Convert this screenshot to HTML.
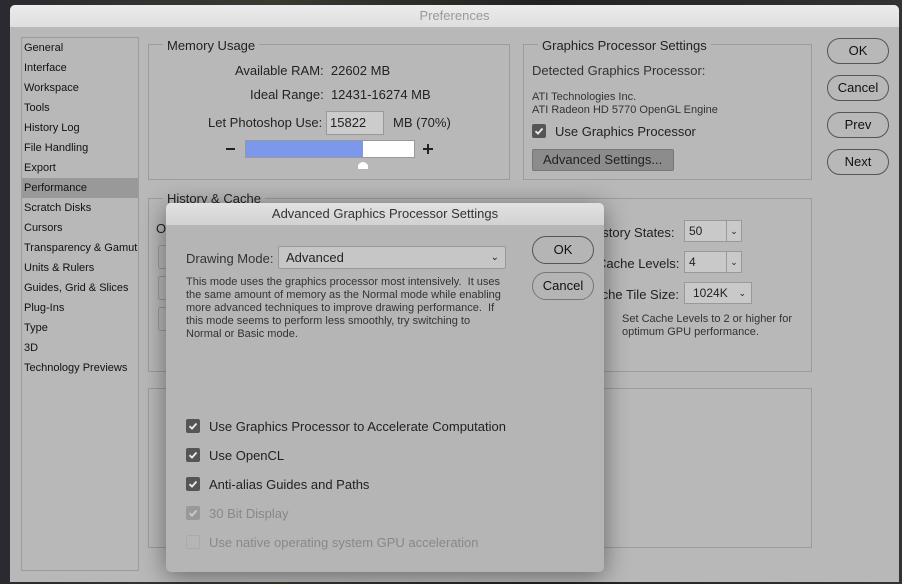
<!DOCTYPE html>
<html><head><style>
*{box-sizing:border-box;margin:0;padding:0}
body{width:902px;height:584px;overflow:hidden;background:linear-gradient(90deg,#2a2a30,#3a3a30 30%,#222 60%,#333);font-family:"Liberation Sans",sans-serif;color:#222;position:relative}
.a{position:absolute}
.win{left:10px;top:5px;width:889px;height:577px;background:#b8b8b8;border-radius:5px 5px 0 0}
.tb{left:0;top:0;width:889px;height:22px;background:linear-gradient(#ececec,#dedede);border-radius:5px 5px 0 0;text-align:center;font-size:13px;color:#999;line-height:22px}
.grp{border:1px solid #9c9c9c}
.lg{background:#b8b8b8;padding:0 4px;font-size:13px;color:#222}
.side{left:11px;top:32px;width:118px;height:534px;border:1px solid #9c9c9c}
.side div{height:20px;line-height:20px;font-size:11px;padding-left:2px;color:#111;white-space:nowrap;overflow:hidden}
.btn{border:1px solid #555;border-radius:14px;text-align:center;font-size:13px;color:#111;line-height:23px;height:26px;width:62px}
.cb{width:14px;height:14px;background:#555;border-radius:2px}
.cb svg{display:block}
.sel{border:1px solid #999;background:#c9c9c9;height:22px;font-size:12px;line-height:20px;padding-left:4px}
</style></head><body>
<div class="a win">
 <div class="a tb">Preferences</div>
 <div class="a side">
  <div>General</div><div>Interface</div><div>Workspace</div><div>Tools</div><div>History Log</div><div>File Handling</div><div>Export</div><div style="background:#999">Performance</div><div>Scratch Disks</div><div>Cursors</div><div>Transparency &amp; Gamut</div><div>Units &amp; Rulers</div><div>Guides, Grid &amp; Slices</div><div>Plug-Ins</div><div>Type</div><div>3D</div><div>Technology Previews</div>
 </div>
 <div class="a grp" style="left:138px;top:39px;width:362px;height:136px"></div>
 <div class="a lg" style="left:153px;top:33px">Memory Usage</div>
 <div class="a" style="left:225px;top:58px;font-size:13px">Available RAM:&nbsp; 22602 MB</div>
 <div class="a" style="left:240px;top:82px;font-size:13px">Ideal Range:&nbsp; 12431-16274 MB</div>
 <div class="a" style="left:198px;top:110px;font-size:13px">Let Photoshop Use:</div>
 <div class="a" style="left:316px;top:106px;width:58px;height:24px;background:#ccc;border:1px solid #999;font-size:13px;line-height:22px;padding-left:3px">15822</div>
 <div class="a" style="left:383px;top:110px;font-size:13px">MB (70%)</div>
 <div class="a" style="left:216px;top:143px;width:9px;height:2px;background:#222"></div>
 <div class="a" style="left:235px;top:135px;width:170px;height:18px;background:#fff;border:1px solid #999"><div style="width:117px;height:16px;background:#7c98ec"></div></div>
 <div class="a" style="left:413px;top:143px;width:10px;height:2px;background:#222"></div>
 <div class="a" style="left:417px;top:139px;width:2px;height:10px;background:#222"></div>
 <svg class="a" style="left:347px;top:154px" width="12" height="11"><path d="M1 10 L1 6 Q6 0 11 6 L11 10 Z" fill="#fff"/></svg>
 <div class="a grp" style="left:513px;top:39px;width:289px;height:136px"></div>
 <div class="a lg" style="left:528px;top:33px">Graphics Processor Settings</div>
 <div class="a" style="left:522px;top:58px;font-size:13px;color:#333">Detected Graphics Processor:</div>
 <div class="a" style="left:522px;top:86px;font-size:11px;color:#333;line-height:13px">ATI Technologies Inc.<br>ATI Radeon HD 5770 OpenGL Engine</div>
 <div class="a cb" style="left:522px;top:119px"><svg width="14" height="14"><path d="M3.5 7.2 L6 9.6 L10.5 4.5" stroke="#eee" stroke-width="1.8" fill="none"/></svg></div>
 <div class="a" style="left:545px;top:119px;font-size:13px">Use Graphics Processor</div>
 <div class="a" style="left:522px;top:144px;width:142px;height:22px;background:#8c8c8c;border:1px solid #777;border-radius:2px;font-size:13px;line-height:20px;padding-left:10px">Advanced Settings...</div>
 <div class="a btn" style="left:817px;top:33px">OK</div>
 <div class="a btn" style="left:817px;top:70px">Cancel</div>
 <div class="a btn" style="left:817px;top:107px">Prev</div>
 <div class="a btn" style="left:817px;top:144px">Next</div>
 <div class="a grp" style="left:138px;top:193px;width:664px;height:174px"></div>
 <div class="a lg" style="left:153px;top:186px">History &amp; Cache</div>
 <div class="a grp" style="left:138px;top:383px;width:664px;height:160px"></div>
 <div class="a" style="left:580px;top:220px;font-size:13px">History States:</div>
 <div class="a sel" style="left:674px;top:215px;width:58px">50<span style="position:absolute;right:0;top:0;width:15px;border-left:1px solid #999;text-align:center;font-size:9px">⌄</span></div>
 <div class="a" style="left:587px;top:251px;font-size:13px">Cache Levels:</div>
 <div class="a sel" style="left:674px;top:246px;width:58px">4<span style="position:absolute;right:0;top:0;width:15px;border-left:1px solid #999;text-align:center;font-size:9px">⌄</span></div>
 <div class="a" style="left:575px;top:282px;font-size:13px">Cache Tile Size:</div>
 <div class="a sel" style="left:674px;top:277px;width:68px;padding-left:8px">1024K<span style="position:absolute;right:5px;top:0;font-size:9px">⌄</span></div>
 <div class="a" style="left:612px;top:308px;font-size:11px;color:#333;line-height:13px">Set Cache Levels to 2 or higher for<br>optimum GPU performance.</div>
 <div class="a" style="left:146px;top:216px;font-size:13px">O</div>
 <div class="a" style="left:148px;top:240px;width:20px;height:24px;border:1px solid #999;border-radius:3px"></div>
 <div class="a" style="left:148px;top:271px;width:20px;height:24px;border:1px solid #999;border-radius:3px"></div>
 <div class="a" style="left:148px;top:302px;width:20px;height:24px;border:1px solid #999;border-radius:3px"></div>
</div>
<div class="a" style="left:166px;top:203px;width:438px;height:369px;background:#b5b5b5;border-radius:5px;box-shadow:0 4px 25px rgba(0,0,0,.45)">
 <div class="a" style="left:0;top:0;width:438px;height:22px;background:linear-gradient(#e2e2e2,#d2d2d2);border-radius:5px 5px 0 0;text-align:center;font-size:13px;color:#333;line-height:22px">Advanced Graphics Processor Settings</div>
 <div class="a" style="left:20px;top:48px;font-size:13px;color:#333">Drawing Mode:</div>
 <div class="a" style="left:112px;top:43px;width:228px;height:23px;border:1px solid #999;background:#c6c6c6;border-radius:2px;font-size:13px;line-height:21px;padding-left:7px">Advanced<span style="position:absolute;right:6px;top:0;font-size:10px">⌄</span></div>
 <div class="a" style="left:20px;top:73px;font-size:11px;color:#333;line-height:13px;width:318px">This mode uses the graphics processor most intensively.&nbsp; It uses the same amount of memory as the Normal mode while enabling more advanced techniques to improve drawing performance.&nbsp; If this mode seems to perform less smoothly, try switching to Normal or Basic mode.</div>
 <div class="a btn" style="left:366px;top:33px;width:62px;height:28px;line-height:26px">OK</div>
 <div class="a btn" style="left:366px;top:69px;width:62px;height:28px;line-height:26px;border-color:#777">Cancel</div>
 <div class="a cb" style="left:20px;top:216px"><svg width="14" height="14"><path d="M3.5 7.2 L6 9.6 L10.5 4.5" stroke="#eee" stroke-width="1.8" fill="none"/></svg></div><div class="a" style="left:43px;top:216px;font-size:13px">Use Graphics Processor to Accelerate Computation</div>
 <div class="a cb" style="left:20px;top:245px"><svg width="14" height="14"><path d="M3.5 7.2 L6 9.6 L10.5 4.5" stroke="#eee" stroke-width="1.8" fill="none"/></svg></div><div class="a" style="left:43px;top:245px;font-size:13px">Use OpenCL</div>
 <div class="a cb" style="left:20px;top:274px"><svg width="14" height="14"><path d="M3.5 7.2 L6 9.6 L10.5 4.5" stroke="#eee" stroke-width="1.8" fill="none"/></svg></div><div class="a" style="left:43px;top:274px;font-size:13px">Anti-alias Guides and Paths</div>
 <div class="a cb" style="left:20px;top:303px;background:#999"><svg width="14" height="14"><path d="M3.5 7.2 L6 9.6 L10.5 4.5" stroke="#ccc" stroke-width="1.8" fill="none"/></svg></div><div class="a" style="left:43px;top:303px;font-size:13px;color:#888">30 Bit Display</div>
 <div class="a" style="left:20px;top:332px;width:14px;height:14px;border:1px solid #aaa;border-radius:2px"></div><div class="a" style="left:43px;top:332px;font-size:13px;color:#888">Use native operating system GPU acceleration</div>
</div>
</body></html>
